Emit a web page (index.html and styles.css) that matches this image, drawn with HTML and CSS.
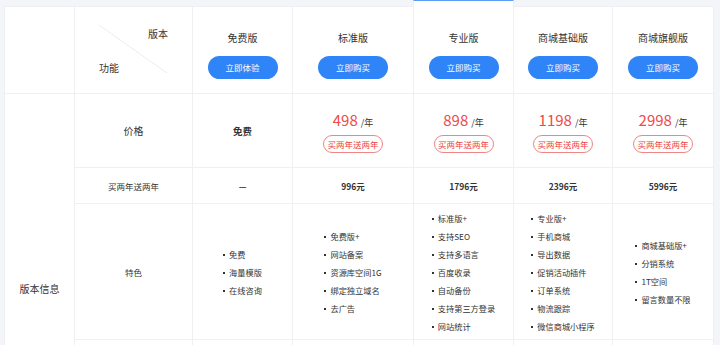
FILE: index.html
```html
<!DOCTYPE html>
<html lang="zh">
<head>
<meta charset="utf-8">
<title>版本对比</title>
<link rel="stylesheet" href="styles.css">
</head>
<body>
<div class="page">
<table class="compare">
  <colgroup>
    <col class="c0"><col class="c1"><col class="c2"><col class="c3"><col class="c4"><col class="c5"><col class="c6">
  </colgroup>
  <thead>
    <tr class="row-head">
      <th class="blank"></th>
      <th class="corner">
        <div class="diag">
          <span class="diag-top">版本</span>
          <span class="diag-bottom">功能</span>
        </div>
      </th>
      <th><div class="plan"><span class="plan-name">免费版</span><a class="btn">立即体验</a></div></th>
      <th><div class="plan"><span class="plan-name">标准版</span><a class="btn">立即购买</a></div></th>
      <th class="hl"><div class="plan"><span class="plan-name">专业版</span><a class="btn">立即购买</a></div></th>
      <th><div class="plan"><span class="plan-name">商城基础版</span><a class="btn">立即购买</a></div></th>
      <th><div class="plan"><span class="plan-name">商城旗舰版</span><a class="btn">立即购买</a></div></th>
    </tr>
  </thead>
  <tbody>
    <tr class="row-price">
      <td class="group" rowspan="4">版本信息</td>
      <td class="label big">价格</td>
      <td class="free">免费</td>
      <td><div class="price"><span class="num">498</span><span class="unit">/年</span></div><span class="badge">买两年送两年</span></td>
      <td><div class="price"><span class="num">898</span><span class="unit">/年</span></div><span class="badge">买两年送两年</span></td>
      <td><div class="price"><span class="num">1198</span><span class="unit">/年</span></div><span class="badge">买两年送两年</span></td>
      <td><div class="price"><span class="num">2998</span><span class="unit">/年</span></div><span class="badge">买两年送两年</span></td>
    </tr>
    <tr class="row-promo">
      <td class="label">买两年送两年</td>
      <td class="val">—</td>
      <td class="val">996元</td>
      <td class="val">1796元</td>
      <td class="val">2396元</td>
      <td class="val">5996元</td>
    </tr>
    <tr class="row-feat">
      <td class="label">特色</td>
      <td><ul class="feat"><li>免费</li><li>海量模版</li><li>在线咨询</li></ul></td>
      <td><ul class="feat"><li>免费版+</li><li>网站备案</li><li>资源库空间1G</li><li>绑定独立域名</li><li>去广告</li></ul></td>
      <td><ul class="feat"><li>标准版+</li><li>支持SEO</li><li>支持多语言</li><li>百度收录</li><li>自动备份</li><li>支持第三方登录</li><li>网站统计</li></ul></td>
      <td><ul class="feat"><li>专业版+</li><li>手机商城</li><li>导出数据</li><li>促销活动插件</li><li>订单系统</li><li>物流跟踪</li><li>微信商城小程序</li></ul></td>
      <td><ul class="feat"><li>商城基础版+</li><li>分销系统</li><li>1T空间</li><li>留言数量不限</li></ul></td>
    </tr>
    <tr class="row-more">
      <td class="label"></td>
      <td></td><td></td><td></td><td></td><td></td>
    </tr>
  </tbody>
</table>
</div>
</body>
</html>
```
FILE: styles.css
```css
* { box-sizing: border-box; }
html, body { margin: 0; padding: 0; }
body {
  background: #f4f5f8;
  font-family: "Noto Sans CJK SC", "Noto Sans", sans-serif;
  color: #333;
}
.page { padding: 6px 7px 0 4px; }

.compare {
  width: 709px;
  border-collapse: collapse;
  table-layout: fixed;
  background: #fff;
}
.c0 { width: 70px; }
.c1 { width: 118px; }
.c2 { width: 100px; }
.c3 { width: 121px; }
.c4 { width: 100px; }
.c5 { width: 99px; }
.c6 { width: 101px; }

.compare th, .compare td {
  border: 1px solid #eef0f3;
  padding: 0;
  text-align: center;
  vertical-align: middle;
  font-weight: normal;
}

/* header */
.row-head th { height: 87px; vertical-align: top; }
.corner { padding: 18px 0 0 24px !important; }
.diag {
  width: 68px;
  height: 48px;
  display: flex;
  flex-direction: column;
  justify-content: space-between;
  background: linear-gradient(to top right, transparent calc(50% - 0.6px), #e4e6ea 50%, transparent calc(50% + 0.6px));
  font-size: 10px;
  line-height: 14px;
  color: #333;
}
.diag-top { align-self: flex-end; margin-right: -1px; margin-top: 2px; }
.diag-bottom { align-self: flex-start; margin-bottom: -2px; }

.plan {
  display: flex;
  flex-direction: column;
  align-items: center;
  padding-top: 24px;
}
.plan-name { font-size: 10px; line-height: 14px; color: #333; }
.btn {
  margin-top: 11px;
  width: 70px;
  height: 23px;
  border-radius: 12px;
  background: #2f84f7;
  color: #fff;
  font-size: 8.5px;
  line-height: 23px;
  text-decoration: none;
}

.hl { position: relative; }
.hl::before {
  content: "";
  position: absolute;
  left: -1px;
  right: -1px;
  top: -7px;
  height: 7px;
  background: #fff;
  border-left: 1px solid #eef0f3;
  border-right: 1px solid #eef0f3;
  border-top: 1px solid #5b9cf6;
}

/* rows */
.row-price td { height: 74px; }
.row-promo td { height: 36px; }
.row-feat td { height: 136px; }
.row-more td { height: 144px; }

.group { font-size: 10px; color: #333; }
.label { font-size: 8.5px; color: #333; }
.label.big { font-size: 10px; }
.free { font-size: 9.5px; font-weight: bold !important; color: #333; }
.val { font-size: 8.5px; font-weight: bold !important; color: #333; }

.price { line-height: 20px; height: 20px; }
.num { font-size: 15px; color: #f04a4a; }
.unit { font-size: 9px; color: #333; margin-left: 3px; }
.badge {
  display: inline-block;
  margin-top: 4px;
  width: 60px;
  height: 18px;
  border: 1px solid #f08585;
  border-radius: 9px;
  color: #ee4444;
  font-size: 8.5px;
  line-height: 16px;
}

.feat {
  display: inline-block;
  list-style: none;
  margin: 0;
  padding: 0;
  text-align: left;
  font-size: 8.2px;
  line-height: 18px;
  color: #333;
}
.feat li::before {
  content: "";
  display: inline-block;
  width: 2px;
  height: 2px;
  background: #333;
  vertical-align: middle;
  margin-right: 4px;
}
```
